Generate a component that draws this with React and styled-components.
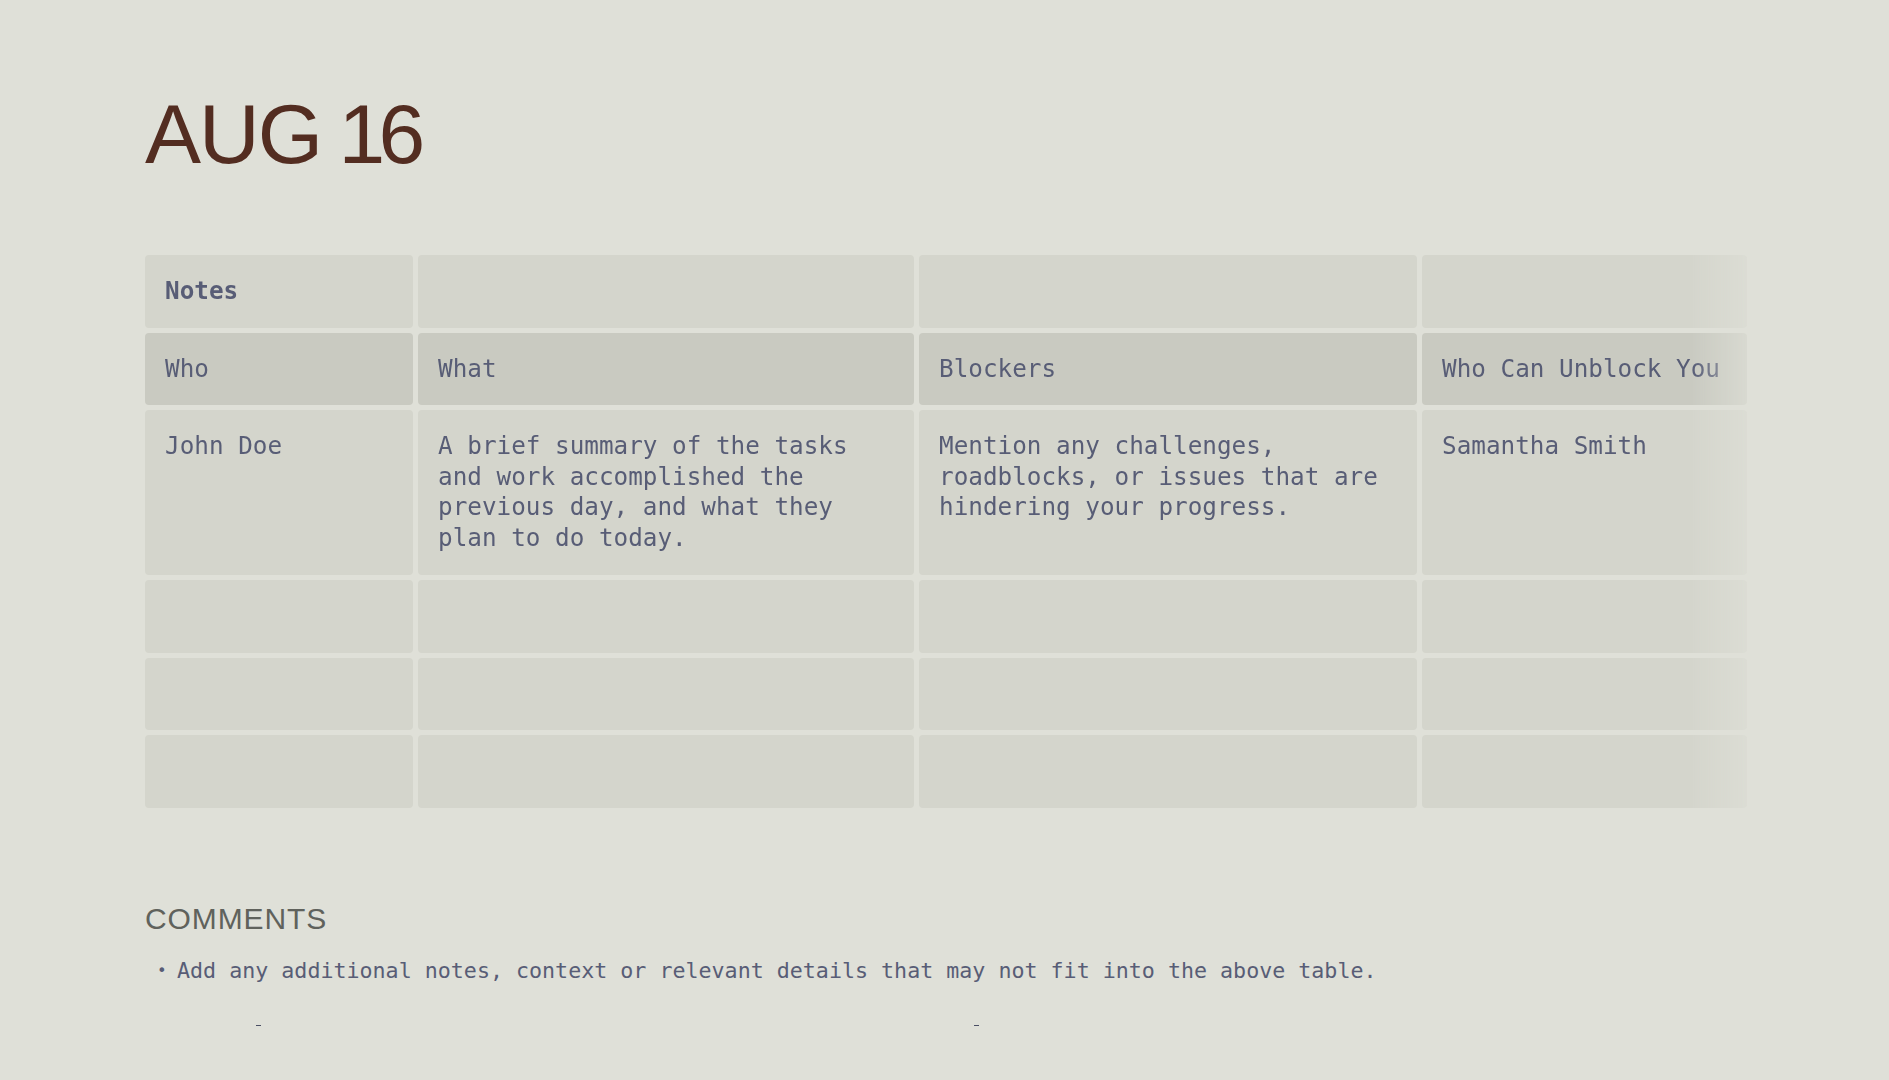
import styled, { createGlobalStyle } from 'styled-components';

const GlobalStyle = createGlobalStyle`
  html, body {
    margin: 0;
    padding: 0;
    background: #dfe0d8;
  }
  body {
    overflow: hidden;
  }
`;

const columns = ['Who', 'What', 'Blockers', 'Who Can Unblock You'];

const entry = [
  'John Doe',
  'A brief summary of the tasks and work accomplished the previous day, and what they plan to do today.',
  'Mention any challenges, roadblocks, or issues that are hindering your progress.',
  'Samantha Smith',
];

const App = () => {
  return (
    <Page>
      <GlobalStyle />
      <Title>
        AUG <Digits>16</Digits>
      </Title>
      <Table>
        <Cell>
          <Label>Notes</Label>
        </Cell>
        <Cell />
        <Cell />
        <Cell />
        {columns.map((c) => (
          <Cell key={c} $head>
            <Text>{c}</Text>
          </Cell>
        ))}
        {entry.map((t, i) => (
          <Cell key={i} $top>
            <Text>{t}</Text>
          </Cell>
        ))}
        {Array.from({ length: 12 }).map((_, i) => (
          <Cell key={'e' + i} />
        ))}
      </Table>
      <Comments>
        <Heading>COMMENTS</Heading>
        <List>
          <Item>
            Add any additional notes, context or relevant details that may not fit into the above table.
          </Item>
        </List>
      </Comments>
      <Marks>
        <Tick $left={111} />
        <Tick $left={713} />
      </Marks>
    </Page>
  );
};

const Page = styled.main`
  padding: 92px 0 0 145px;
  min-height: 1080px;
  box-sizing: border-box;
`;

const Title = styled.h1`
  margin: 0;
  font-family: 'Liberation Sans', Arial, sans-serif;
  font-weight: 400;
  font-size: 84px;
  line-height: 84px;
  letter-spacing: -2px;
  word-spacing: -4px;
  color: #532d21;
`;

const Digits = styled.span`
  letter-spacing: -6.5px;
`;

const Table = styled.div`
  margin-top: 79px;
  width: 1602px;
  display: grid;
  grid-template-columns: 268px 496px 498px 325px;
  grid-template-rows: 72.5px 72.5px 165px 72.5px 72.5px 72.5px;
  gap: 5px;
  -webkit-mask-image: linear-gradient(to right, #000 calc(100% - 55px), rgba(0, 0, 0, 0.3) 100%);
  mask-image: linear-gradient(to right, #000 calc(100% - 55px), rgba(0, 0, 0, 0.3) 100%);
`;

const Cell = styled.div`
  background: ${(p) => (p.$head ? '#c9cac1' : '#d4d5cc')};
  border-radius: 4px;
  padding: ${(p) => (p.$top ? '21px 20px 0' : '0 20px')};
  display: flex;
  align-items: ${(p) => (p.$top ? 'flex-start' : 'center')};
  min-width: 0;
`;

const Text = styled.span`
  font-family: 'DejaVu Sans Mono', monospace;
  font-size: 24.3px;
  line-height: 30.5px;
  color: #585d76;
`;

const Label = styled(Text)`
  font-weight: 700;
`;

const Comments = styled.section`
  margin-top: 96px;
`;

const Heading = styled.h2`
  margin: 0;
  font-family: 'Liberation Sans', Arial, sans-serif;
  font-weight: 400;
  font-size: 30px;
  line-height: 30px;
  letter-spacing: 0.9px;
  color: #60625c;
`;

const List = styled.ul`
  margin: 22px 0 0;
  padding: 0;
  list-style: none;
`;

const Item = styled.li`
  display: flex;
  font-family: 'DejaVu Sans Mono', monospace;
  font-size: 21.66px;
  line-height: 30px;
  color: #585d76;

  &::before {
    content: '•';
    font-size: 16px;
    width: 32px;
    padding-left: 12px;
    box-sizing: border-box;
    color: #585d76;
  }
`;

const Marks = styled.div`
  display: flex;
  margin-top: 39px;
`;

const Tick = styled.span`
  display: block;
  width: 5px;
  height: 1.5px;
  margin-left: ${(p) => p.$left}px;
  background: #4a4f64;
`;

export default App;
